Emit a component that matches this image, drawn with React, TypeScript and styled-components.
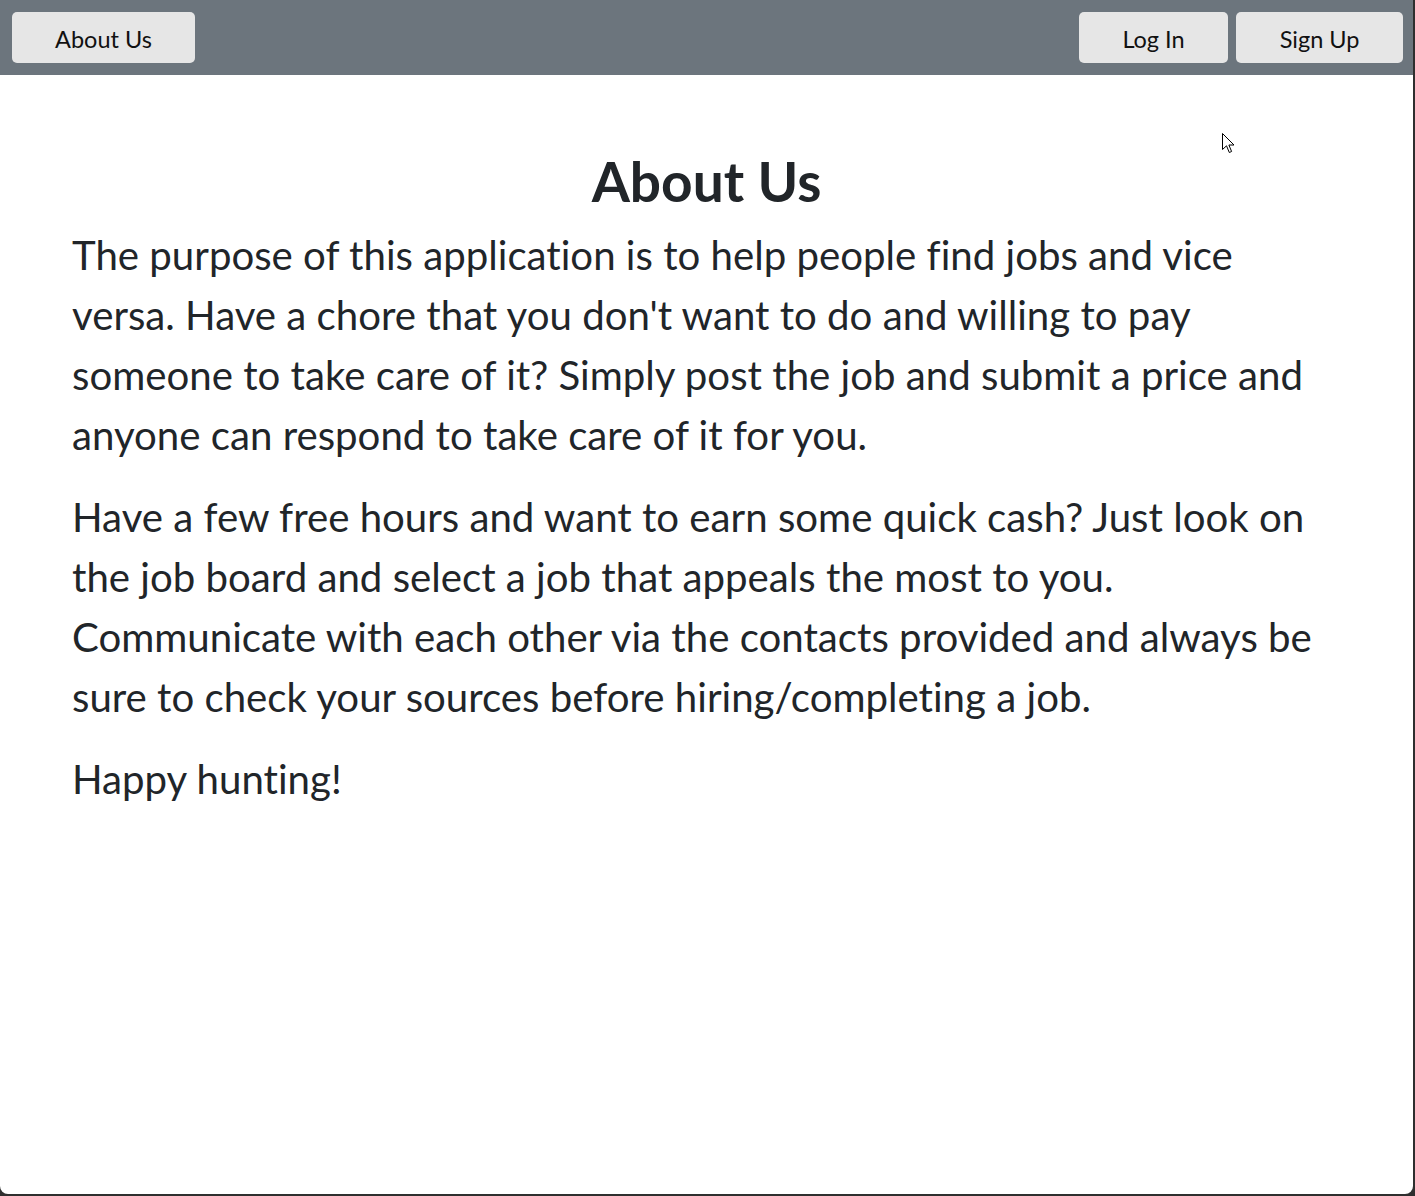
import React from "react";
import styled, { createGlobalStyle } from "styled-components";

const GlobalStyle = createGlobalStyle`
  html, body {
    margin: 0;
    padding: 0;
    background: #2f2f2f;
  }
  body {
    font-family: "Lato", "Noto Sans", sans-serif;
    font-variant-ligatures: none;
    color: #212529;
  }
  * { box-sizing: border-box; }
`;

const Window = styled.div`
  position: relative;
  width: 1413px;
  height: 1194px;
  background: #ffffff;
  border-radius: 0 0 8px 8px;
  overflow: hidden;
  display: flex;
  flex-direction: column;
`;

const NavBar = styled.nav`
  height: 75px;
  background: #6c757d;
  display: flex;
  align-items: center;
  justify-content: space-between;
  padding: 0 10px 0 12px;
`;

const NavGroup = styled.div`
  display: flex;
  align-items: center;
  gap: 8px;
`;

const NavButton = styled.button<{ $width: number }>`
  width: ${(p) => p.$width}px;
  height: 51px;
  padding: 3px 0 0;
  border: none;
  border-radius: 5px;
  background: #e6e6e6;
  color: #111111;
  font-family: "Lato", "Noto Sans", sans-serif;
  font-variant-ligatures: none;
  font-size: 23.5px;
  font-weight: 400;
  display: flex;
  align-items: center;
  justify-content: center;
  cursor: pointer;
`;

const Main = styled.main`
  padding: 73px 72px 0;
  display: flex;
  flex-direction: column;
`;

const Title = styled.h1`
  margin: 0 0 11px;
  text-align: center;
  font-size: 55px;
  font-weight: 700;
  line-height: 66px;
  color: #212529;
`;

const Paragraph = styled.p`
  margin: 0 0 22px;
  font-size: 40.2px;
  line-height: 60px;
  font-weight: 400;
  color: #212529;
`;

const Pointer = styled.svg`
  position: absolute;
  left: 1222px;
  top: 133px;
  width: 14px;
  height: 21px;
  pointer-events: none;
`;

export default function App() {
  return (
    <>
      <GlobalStyle />
      <Window>
        <NavBar>
          <NavGroup>
            <NavButton $width={183}>About Us</NavButton>
          </NavGroup>
          <NavGroup>
            <NavButton $width={149}>Log In</NavButton>
            <NavButton $width={167}>Sign Up</NavButton>
          </NavGroup>
        </NavBar>
        <Main>
          <Title>About Us</Title>
          <Paragraph>
            The purpose of this application is to help people find jobs and vice versa. Have a chore that
            you don't want to do and willing to pay someone to take care of it? Simply post the job and
            submit a price and anyone can respond to take care of it for you.
          </Paragraph>
          <Paragraph>
            Have a few free hours and want to earn some quick cash? Just look on the job board and select a
            job that appeals the most to you. Communicate with each other via the contacts provided and
            always be sure to check your sources before hiring/completing a job.
          </Paragraph>
          <Paragraph>Happy hunting!</Paragraph>
        </Main>
        <Pointer viewBox="0 0 14 21">
          <path
            d="M0.5 0.5 L0.5 16.5 L4.5 12.8 L7.3 19.5 L9.6 18.5 L6.9 12 L12 12 Z"
            fill="#ffffff"
            stroke="#000000"
            strokeWidth="1"
            strokeLinejoin="miter"
          />
        </Pointer>
      </Window>
    </>
  );
}
